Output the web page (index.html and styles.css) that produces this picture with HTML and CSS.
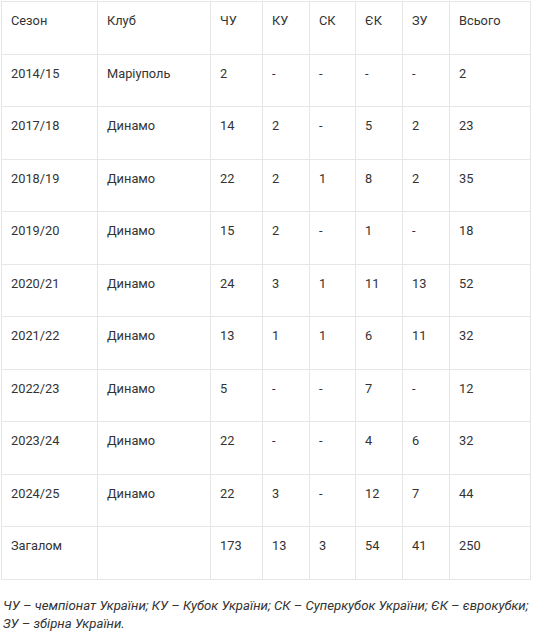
FILE: index.html
```html
<!DOCTYPE html>
<html lang="uk">
<head>
<meta charset="utf-8">
<link rel="stylesheet" href="styles.css">
</head>
<body>
<div class="page">
<table class="stats">
<colgroup>
<col class="c1"><col class="c2"><col class="c3"><col class="c4"><col class="c5"><col class="c6"><col class="c7"><col class="c8">
</colgroup>
<tbody>
<tr><td>Сезон</td><td>Клуб</td><td>ЧУ</td><td>КУ</td><td>СК</td><td>ЄК</td><td>ЗУ</td><td>Всього</td></tr>
<tr><td>2014/15</td><td>Маріуполь</td><td>2</td><td>-</td><td>-</td><td>-</td><td>-</td><td>2</td></tr>
<tr><td>2017/18</td><td>Динамо</td><td>14</td><td>2</td><td>-</td><td>5</td><td>2</td><td>23</td></tr>
<tr><td>2018/19</td><td>Динамо</td><td>22</td><td>2</td><td>1</td><td>8</td><td>2</td><td>35</td></tr>
<tr><td>2019/20</td><td>Динамо</td><td>15</td><td>2</td><td>-</td><td>1</td><td>-</td><td>18</td></tr>
<tr><td>2020/21</td><td>Динамо</td><td>24</td><td>3</td><td>1</td><td>11</td><td>13</td><td>52</td></tr>
<tr><td>2021/22</td><td>Динамо</td><td>13</td><td>1</td><td>1</td><td>6</td><td>11</td><td>32</td></tr>
<tr><td>2022/23</td><td>Динамо</td><td>5</td><td>-</td><td>-</td><td>7</td><td>-</td><td>12</td></tr>
<tr><td>2023/24</td><td>Динамо</td><td>22</td><td>-</td><td>-</td><td>4</td><td>6</td><td>32</td></tr>
<tr><td>2024/25</td><td>Динамо</td><td>22</td><td>3</td><td>-</td><td>12</td><td>7</td><td>44</td></tr>
<tr><td>Загалом</td><td></td><td>173</td><td>13</td><td>3</td><td>54</td><td>41</td><td>250</td></tr>
</tbody>
</table>
<p class="note">ЧУ – чемпіонат України; КУ – Кубок України; СК – Суперкубок України; ЄК – єврокубки; ЗУ – збірна України.</p>
</div>
</body>
</html>
```
FILE: styles.css
```css
html, body {
  margin: 0;
  padding: 0;
  background: #ffffff;
}
.page {
  padding: 1px 0 0 1px;
  width: 534px;
  font-family: Roboto, "Liberation Sans", sans-serif;
  color: #333333;
}
.stats {
  border-collapse: collapse;
  width: 529px;
  table-layout: fixed;
  font-size: 12.8px;
  line-height: 19px;
}
.c1 { width: 96px; }
.c2 { width: 113px; }
.c3 { width: 52px; }
.c4 { width: 47px; }
.c5 { width: 46px; }
.c6 { width: 47px; }
.c7 { width: 47px; }
.c8 { width: 81px; }
.stats td {
  border: 1px solid #e6e6e6;
  height: 52.5px;
  box-sizing: border-box;
  padding: 9px 8px 0 9px;
  vertical-align: top;
}
.note {
  margin: 17px 0 0 2px;
  font-size: 13.2px;
  line-height: 18px;
  font-style: italic;
}
```
